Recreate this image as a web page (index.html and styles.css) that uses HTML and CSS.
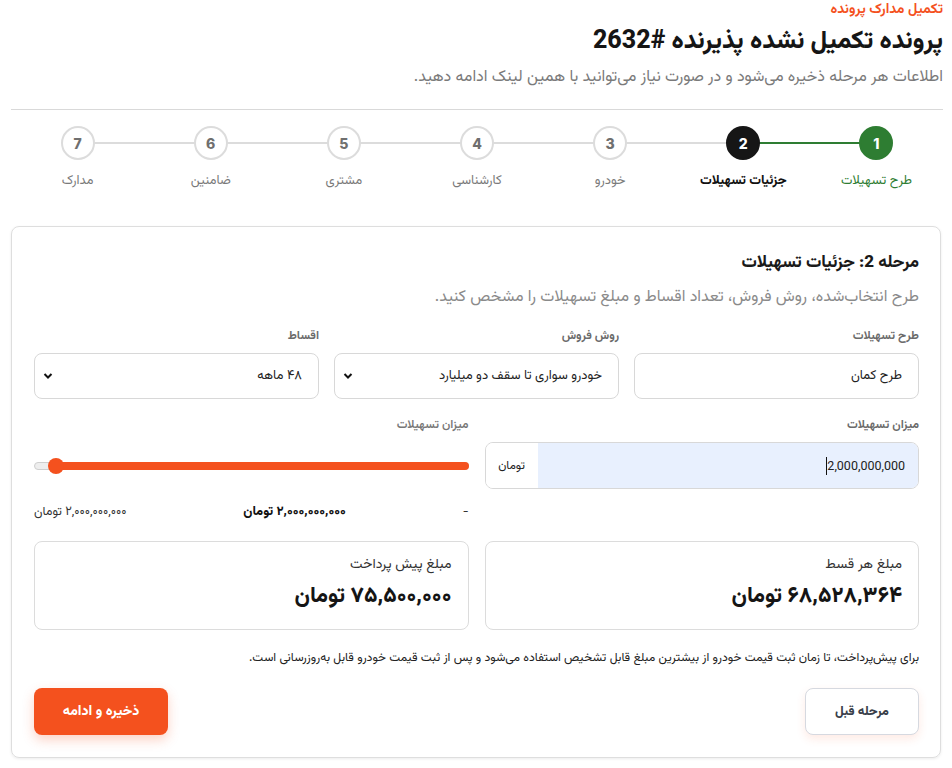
FILE: index.html
```html
<!DOCTYPE html>
<html lang="fa" dir="rtl">
<head>
<meta charset="utf-8">
<title>پرونده تکمیل نشده پذیرنده #2632</title>
<link rel="stylesheet" href="styles.css">
</head>
<body>
<div class="page">
  <div class="eyebrow">تکمیل مدارک پرونده</div>
  <h1 class="title">پرونده تکمیل نشده پذیرنده #2632</h1>
  <p class="subtitle">اطلاعات هر مرحله ذخیره می‌شود و در صورت نیاز می‌توانید با همین لینک ادامه دهید.</p>
  <hr class="divider">

  <ol class="stepper">
    <li class="step done"><span class="circle">1</span><span class="step-label">طرح تسهیلات</span></li>
    <li class="step active"><span class="circle">2</span><span class="step-label">جزئیات تسهیلات</span></li>
    <li class="step"><span class="circle">3</span><span class="step-label">خودرو</span></li>
    <li class="step"><span class="circle">4</span><span class="step-label">کارشناسی</span></li>
    <li class="step"><span class="circle">5</span><span class="step-label">مشتری</span></li>
    <li class="step"><span class="circle">6</span><span class="step-label">ضامنین</span></li>
    <li class="step"><span class="circle">7</span><span class="step-label">مدارک</span></li>
  </ol>

  <section class="card">
    <h2 class="card-title">مرحله 2: جزئیات تسهیلات</h2>
    <p class="card-desc">طرح انتخاب‌شده، روش فروش، تعداد اقساط و مبلغ تسهیلات را مشخص کنید.</p>

    <div class="grid3">
      <div class="field">
        <div class="label">طرح تسهیلات</div>
        <div class="box"><span>طرح کمان</span></div>
      </div>
      <div class="field">
        <div class="label">روش فروش</div>
        <div class="box select"><span>خودرو سواری تا سقف دو میلیارد</span>
          <svg class="chev" viewBox="0 0 10 8" width="10" height="8"><path d="M1.5 2 L5 5.5 L8.5 2" fill="none" stroke="#111" stroke-width="2"/></svg></div>
      </div>
      <div class="field">
        <div class="label">اقساط</div>
        <div class="box select"><span>۴۸ ماهه</span>
          <svg class="chev" viewBox="0 0 10 8" width="10" height="8"><path d="M1.5 2 L5 5.5 L8.5 2" fill="none" stroke="#111" stroke-width="2"/></svg></div>
      </div>
    </div>

    <div class="grid2">
      <div class="field">
        <div class="label">میزان تسهیلات</div>
        <div class="amount">
          <div class="amount-input"><span class="caret"></span><span class="num">2,000,000,000</span></div>
          <div class="amount-unit">تومان</div>
        </div>
      </div>
      <div class="field">
        <div class="label light">میزان تسهیلات</div>
        <div class="slider">
          <div class="track"><div class="fill"></div><div class="thumb"></div></div>
        </div>
        <div class="range">
          <span>-</span>
          <span class="strong">۲,۰۰۰,۰۰۰,۰۰۰ تومان</span>
          <span>۲,۰۰۰,۰۰۰,۰۰۰ تومان</span>
        </div>
      </div>
    </div>

    <div class="grid2 stats">
      <div class="stat">
        <div class="stat-label">مبلغ هر قسط</div>
        <div class="stat-value">۶۸,۵۲۸,۳۶۴ تومان</div>
      </div>
      <div class="stat">
        <div class="stat-label">مبلغ پیش پرداخت</div>
        <div class="stat-value">۷۵,۵۰۰,۰۰۰ تومان</div>
      </div>
    </div>

    <p class="note">برای پیش‌پرداخت، تا زمان ثبت قیمت خودرو از بیشترین مبلغ قابل تشخیص استفاده می‌شود و پس از ثبت قیمت خودرو قابل به‌روزرسانی است.</p>

    <div class="actions">
      <button class="btn btn-secondary" type="button">مرحله قبل</button>
      <button class="btn btn-primary" type="button">ذخیره و ادامه</button>
    </div>
  </section>
</div>
</body>
</html>
```

FILE: styles.css
```css
* { box-sizing: border-box; }
html, body { margin: 0; padding: 0; background: #fff; }
body {
  font-family: "Vazirmatn", "Noto Sans Arabic", "Inter", "DejaVu Sans", sans-serif;
  color: #1a1a1a;
  direction: rtl;
}
.page { padding: 0 9px 10px 11px; }

.eyebrow { color: #f4511e; font-size: 14px; font-weight: 700; line-height: 20px; }
.title { margin: 5px 0 0; font-size: 25px; font-weight: 800; line-height: 34px; color: #151515; }
.subtitle { margin: 7px 0 0; font-size: 16px; color: #7a7a7a; line-height: 24px; }
.divider { margin: 19px 0 0; border: 0; border-top: 1px solid #d9d9d9; }

.stepper {
  list-style: none; margin: 16px 0 0; padding: 0;
  display: grid; grid-template-columns: repeat(7, 1fr);
}
.step { position: relative; display: flex; flex-direction: column; align-items: center; }
.step:not(:last-child)::after {
  content: ""; position: absolute; top: 16px; right: 50%; width: 100%; height: 2px;
  background: #dcdcdc; z-index: 0;
}
.step.done::after { background: #2e7d32; }
.circle {
  position: relative; z-index: 1;
  width: 34px; height: 34px; border-radius: 50%;
  border: 2px solid #dcdcdc; background: #fff;
  display: flex; align-items: center; justify-content: center;
  font-family: "Inter", "DejaVu Sans", sans-serif;
  font-size: 14px; font-weight: 800; color: #6f6f6f;
}
.step.done .circle { background: #2e7d32; border-color: #2e7d32; color: #fff; }
.step.active .circle { background: #161616; border-color: #161616; color: #fff; }
.step-label { margin-top: 12px; font-size: 13px; color: #7a7a7a; line-height: 18px; }
.step.done .step-label { color: #2e7d32; }
.step.active .step-label { color: #111; font-weight: 800; }

.card {
  margin-top: 36px; margin-right: 2px;
  border: 1px solid #dedede; border-radius: 8px;
  box-shadow: 0 1px 3px rgba(0,0,0,0.08);
  padding: 24px 21px 22px 22px;
}
.card-title { margin: 0; font-size: 17px; font-weight: 800; line-height: 24px; }
.card-desc { margin: 11px 0 0; font-size: 16px; color: #8a8a8a; line-height: 24px; }

.grid3 { display: grid; grid-template-columns: repeat(3, 1fr); gap: 15px; margin-top: 17px; }
.grid2 { display: grid; grid-template-columns: 1fr 1fr; gap: 16px; margin-top: 17px; }
.label { font-size: 12px; font-weight: 700; color: #6a6a6a; line-height: 18px; margin-bottom: 8px; }
.label.light { font-weight: 600; color: #777; }
.box {
  height: 46px; border: 1px solid #d8d8d8; border-radius: 8px;
  display: flex; align-items: center; justify-content: space-between;
  padding: 0 16px 0 8px; font-size: 13px; color: #222;
}
.chev { display: block; }

.amount {
  height: 47px; border: 1px solid #d8d8d8; border-radius: 8px; overflow: hidden;
  display: flex;
}
.amount-input {
  flex: 1; background: #e8f0fe; display: flex; align-items: center; justify-content: flex-end;
  padding: 0 13px; direction: ltr;
  font-family: "Roboto", "DejaVu Sans", sans-serif; font-size: 12.5px; color: #222;
}
.amount-input .caret { width: 1px; height: 18px; background: #111; }
.amount-unit { width: 52px; display: flex; align-items: center; justify-content: center; font-size: 12px; color: #222; background: #fff; }

.slider { height: 47px; display: flex; align-items: center; }
.track { position: relative; width: 100%; height: 8px; background: #eee; border: 1px solid #cfcfcf; border-radius: 4px; direction: ltr; }
.fill { position: absolute; top: -1px; bottom: -1px; left: 20px; right: -1px; background: #f4511e; border-radius: 4px; }
.thumb { position: absolute; left: 13px; top: 50%; width: 16px; height: 16px; margin-top: -8px; border-radius: 50%; background: #f4511e; }
.range { display: flex; justify-content: space-between; align-items: center; margin-top: 14px; font-size: 12.5px; color: #333; line-height: 18px; }
.range .strong { font-weight: 800; color: #111; font-size: 13px; }

.stats { margin-top: 20px; }
.stat { height: 89px; border: 1px solid #dcdcdc; border-radius: 8px; padding: 13px 16px; }
.stat-label { font-size: 14px; color: #333; line-height: 20px; }
.stat-value { margin-top: 8px; font-size: 22px; font-weight: 800; line-height: 28px; color: #151515; }

.note { margin: 19px 0 0; font-size: 12.2px; color: #222; line-height: 18px; }

.actions { display: flex; justify-content: space-between; align-items: center; margin-top: 21px; }
.btn {
  font-family: inherit; height: 47px; border-radius: 8px; cursor: pointer;
  font-size: 13px; font-weight: 800;
}
.btn-secondary {
  width: 114px; background: #fff; border: 1px solid #d6d9e0; color: #3a3f4a;
  box-shadow: 0 4px 10px rgba(244,81,30,0.12);
}
.btn-primary {
  width: 134px; background: #f4511e; border: 0; color: #fff; font-size: 14px;
  box-shadow: 0 5px 12px rgba(244,81,30,0.25);
}
```
